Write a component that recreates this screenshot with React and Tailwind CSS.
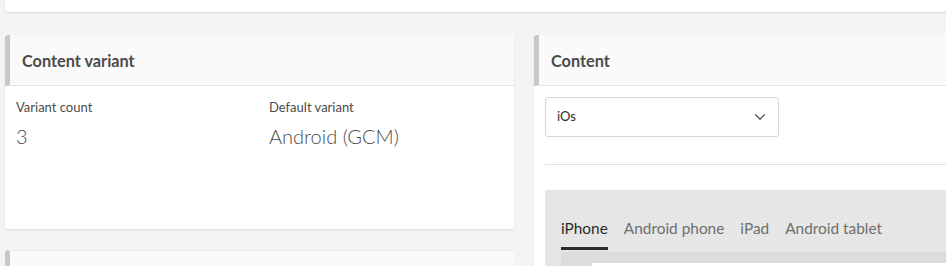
import React from "react";
import { ChevronDown } from "lucide-react";

const CardHeader = ({ title }) => (
  <div className="h-[51px] flex items-center bg-[#fafafa] border-b border-[#e3e3e3] border-l-[5px] border-l-[#c8c8c8] pl-[12px] pt-[2px]">
    <h2 className="text-[16.3px] font-bold text-[#4b4b4b]">{title}</h2>
  </div>
);

const tabs = ["iPhone", "Android phone", "iPad", "Android tablet"];

const App = () => {
  return (
    <div
      className="h-[266px] w-[946px] overflow-hidden bg-[#f4f4f4]"
      style={{ fontFamily: "Lato, 'Open Sans', sans-serif" }}
    >
      <div className="ml-[5px] h-[12px] bg-white rounded-b-[3px] shadow-[0_1px_2px_rgba(0,0,0,0.12)]"></div>

      <div className="flex gap-[20px] pl-[5px] mt-[23px]">
        <div className="w-[509px] shrink-0 flex flex-col gap-[21px]">
          <div className="h-[194px] bg-white rounded-[3px] shadow-[0_1px_2px_rgba(0,0,0,0.1)] overflow-hidden">
            <CardHeader title="Content variant" />
            <div className="grid grid-cols-[253px_1fr] px-[11px] pt-[12px] text-[#4b4b4b]">
              <div>
                <div className="text-[13px] leading-[18px]">Variant count</div>
                <div className="text-[20px] font-light leading-[28px] mt-[6px]">3</div>
              </div>
              <div>
                <div className="text-[13px] leading-[18px]">Default variant</div>
                <div className="text-[20px] font-light leading-[28px] mt-[6px]">Android (GCM)</div>
              </div>
            </div>
          </div>
          <div className="h-[60px] bg-white rounded-[3px] overflow-hidden">
            <div className="h-full bg-[#fafafa] border-l-[5px] border-l-[#c8c8c8] border-t border-t-[#e8e8e8]"></div>
          </div>
        </div>

        <div className="w-[440px] shrink-0 bg-white rounded-[3px] shadow-[0_1px_2px_rgba(0,0,0,0.1)] overflow-hidden">
          <CardHeader title="Content" />
          <div className="pl-[11px] pt-[11px]">
            <div className="w-[234px] h-[40px] flex items-center justify-between border border-[#d6d6d6] rounded-[3px] px-[11px] text-[13px] text-[#2c2c2c]">
              <span>iOs</span>
              <ChevronDown size={18} strokeWidth={1.6} className="text-[#505050] -mr-[2px]" />
            </div>
            <div className="mt-[27px] border-t border-[#e1e1e1]"></div>
            <div className="mt-[25px] bg-[#e6e6e6] pl-[16px] pt-[27px] h-[120px]">
              <div className="flex gap-[16px] text-[15.4px]">
                {tabs.map((t, i) => (
                  <div
                    key={t}
                    className={`pb-[7px] border-b-[3px] ${
                      i === 0 ? "border-[#2c2c2c] text-[#2c2c2c]" : "border-transparent text-[#6e6e6e]"
                    }`}
                  >
                    {t}
                  </div>
                ))}
              </div>
              <div className="mt-[2px] bg-[#dcdcdc] h-[40px] pl-[31px] pt-[11px]">
                <div className="bg-white h-full"></div>
              </div>
            </div>
          </div>
        </div>
      </div>
    </div>
  );
};

export default App;
